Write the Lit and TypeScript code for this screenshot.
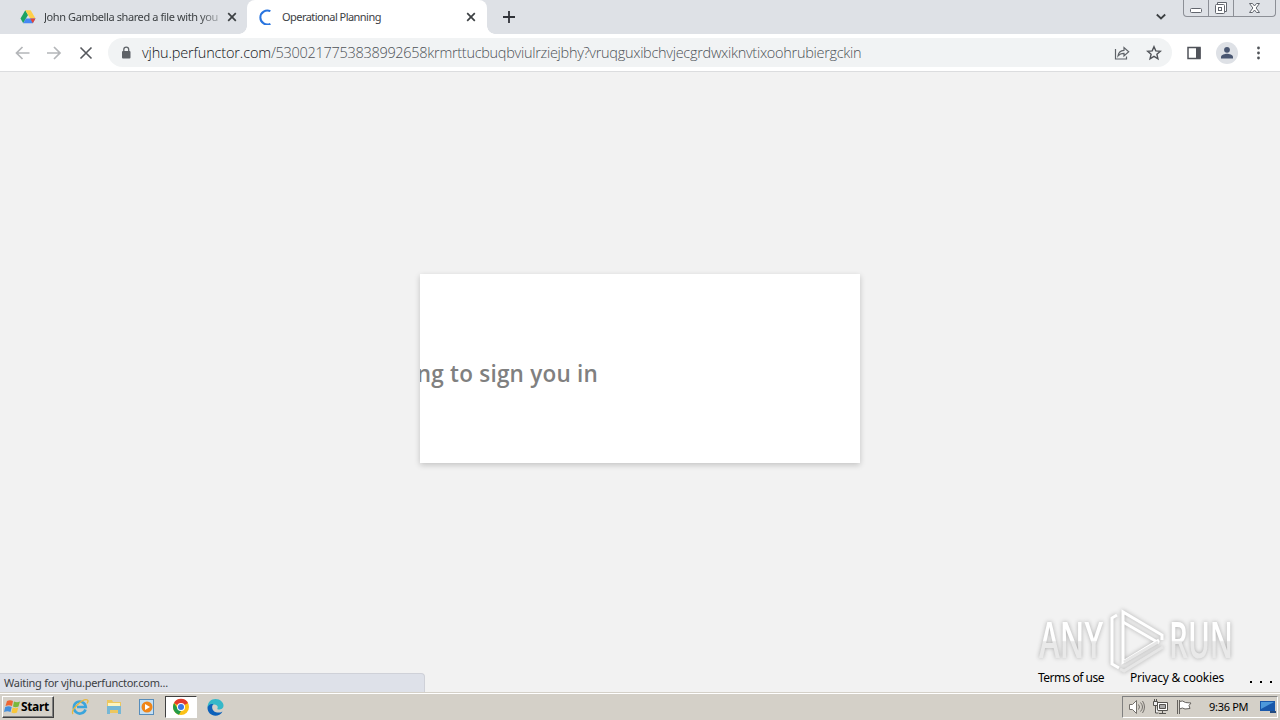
import { LitElement, html, css, svg } from 'lit';
import { customElement } from 'lit/decorators.js';

const closeIcon = html`<svg class="close" width="10" height="10" viewBox="0 0 10 10"><path d="M1.2 1.2 8.8 8.8M8.8 1.2 1.2 8.8" stroke="#3c4043" stroke-width="1.7" /></svg>`;

@customElement('browser-tabs')
export class BrowserTabs extends LitElement {
  static styles = css`
    :host {
      display: flex;
      height: 34px;
      background: #dee1e6;
      color: #3c4043;
      font: 11px/34px 'Noto Sans', sans-serif;
    }
    .tab {
      display: flex;
      align-items: center;
      box-sizing: border-box;
      width: 240px;
      padding: 0 11px 0 11px;
    }
    .first {
      width: 247px;
      padding: 0 10px 0 20px;
    }
    .active {
      position: relative;
      background: #fff;
      border-radius: 8px 8px 0 0;
    }
    .active::before,
    .active::after {
      content: '';
      position: absolute;
      bottom: 0;
      width: 8px;
      height: 8px;
    }
    .active::before {
      left: -8px;
      background: radial-gradient(circle at 0 0, transparent 7.5px, #fff 8px);
    }
    .active::after {
      right: -8px;
      background: radial-gradient(circle at 100% 0, transparent 7.5px, #fff 8px);
    }
    .title {
      flex: 1;
      white-space: nowrap;
      margin-left: 8px;
      letter-spacing: -0.55px;
    }
    .first .title {
      width: 176px;
      margin-right: 6px;
      letter-spacing: -0.4px;
      mask-image: linear-gradient(90deg, #000 155px, rgba(0, 0, 0, 0.2) 178px);
    }
    .close {
      flex: none;
    }
    .plus {
      margin: 11px 0 0 16px;
    }
    .chevron {
      margin: 13px 17px 0 auto;
    }
    .window {
      display: flex;
      box-sizing: border-box;
      width: 93px;
      height: 17px;
      margin-right: 4px;
      border: 1px solid #8c8f96;
      border-top: 0;
      border-radius: 0 0 4px 4px;
    }
  `;

  render() {
    return html`
      <div class="tab first">
        <svg width="16" height="16" viewBox="0 0 16 16">
          <path fill="#1ea362" d="M5.3 1.2 8 5.9 3.2 14.2.5 9.6z" />
          <path fill="#ffcf48" d="M5.3 1.2h5.4l4.8 8.4h-5.4z" />
          <path fill="#4688f4" d="M3.2 14.2 5.9 9.6h9.6l-2.7 4.6z" />
          <path fill="#e94335" d="m12.8 14.2-2.6-4.6h5.3z" />
        </svg>
        <span class="title">John Gambella shared a file with you</span>${closeIcon}
      </div>
      <div class="tab active">
        <svg width="16" height="16" viewBox="0 0 16 16">
          <path d="M12.4 2.2A7 7 0 1 0 12.4 14.8" fill="none" stroke="#2874df" stroke-width="2" />
        </svg>
        <span class="title">Operational Planning</span>${closeIcon}
      </div>
      <svg class="plus" width="12" height="12" viewBox="0 0 12 12"><path d="M6 0v12M0 6h12" stroke="#303238" stroke-width="1.8" /></svg>
      <svg class="chevron" width="10" height="8" viewBox="0 0 10 8"><path d="m.8 1.5 4.2 4 4.2-4" fill="none" stroke="#3c4043" stroke-width="1.8" /></svg>
      <div class="window">
        <svg width="91" height="16" viewBox="0 0 91 16" fill="none" stroke="#62666e">
          <path d="M24.5 0v16M49.5 0v16" stroke="#8c8f96" />
          <rect x="6.5" y="8.5" width="11" height="4" rx="1" fill="#fff" />
          <path d="M33.5 4.5V2.5H42.5V11.5H40.5" fill="#fff" />
          <rect x="31.5" y="4.5" width="9" height="9" rx="1" fill="#fff" />
          <rect x="34.5" y="7.5" width="3" height="3" />
          <path d="M65.5 3.5h3l2 2.5 2-2.5h3l-3.4 4.5 3.4 4.5h-3l-2-2.5-2 2.5h-3l3.4-4.5z" fill="#fff" />
        </svg>
      </div>
    `;
  }
}

@customElement('browser-toolbar')
export class BrowserToolbar extends LitElement {
  static styles = css`
    :host {
      display: flex;
      align-items: center;
      box-sizing: border-box;
      height: 38px;
      padding: 0 12px 0 14px;
      background: #fff;
      border-bottom: 1px solid #dcdddf;
    }
    .nav {
      margin-right: 16px;
    }
    .address {
      display: flex;
      align-items: center;
      box-sizing: border-box;
      width: 1064px;
      height: 29px;
      padding: 0 10px 0 12px;
      margin: 0 14px 0 -2px;
      border-radius: 15px;
      background: #f1f3f4;
    }
    .url {
      flex: 1;
      margin-left: 10px;
      white-space: nowrap;
      font: 300 14.5px/28px 'Open Sans', sans-serif;
      letter-spacing: -0.29px;
      color: #4d5257;
    }
    .host {
      letter-spacing: -0.15px;
      color: #111317;
    }
    .star {
      margin-left: 16px;
    }
    .avatar {
      margin: 0 14px;
    }
  `;

  render() {
    return html`
      <svg class="nav" width="16" height="16" viewBox="0 0 16 16"><path d="M15.5 8H3M8.5 2 2.5 8l6 6" fill="none" stroke="#b4b6b9" stroke-width="1.7" /></svg>
      <svg class="nav" width="16" height="16" viewBox="0 0 16 16"><path d="M1 8h12.5M8 2l6 6-6 6" fill="none" stroke="#b4b6b9" stroke-width="1.7" /></svg>
      <svg class="nav" width="16" height="16" viewBox="0 0 16 16"><path d="m2.5 2.5 11 11m0-11-11 11" stroke="#55585d" stroke-width="1.6" /></svg>
      <div class="address">
        <svg width="12" height="14" viewBox="0 0 12 14">
          <rect x="2" y="5" width="8.5" height="7.5" rx="1" fill="#5f6368" />
          <path d="M3.8 5.5V3.5a2.45 2.45 0 0 1 4.9 0v2" fill="none" stroke="#5f6368" stroke-width="1.3" />
        </svg>
        <span class="url"><span class="host">vjhu.perfunctor.com</span>/5300217753838992658krmrttucbuqbviulrziejbhy?vruqguxibchvjecgrdwxiknvtixoohrubiergckin</span>
        <svg width="16" height="16" viewBox="0 0 16 16" fill="none" stroke="#5f6368" stroke-width="1.2">
          <path d="M1.5 4v10h11v-2.5M4 11c.4-3.800 2.5-5.500 6-5.700V2.500l4.700 4.300L10 11V8.300c-2.700 0-4.500.7-6 2.700z" />
        </svg>
        <svg class="star" width="16" height="16" viewBox="0 0 16 16"><path d="m8 1.700 1.800 4.200 4.600.4-3.500 3 1.050 4.500L8 11.400l-3.950 2.400 1.050-4.500-3.500-3 4.600-.4z" fill="none" stroke="#505358" stroke-width="1.4" /></svg>
      </div>
      <svg width="16" height="16" viewBox="0 0 16 16"><path d="M2 2.500h12v11H2z" fill="none" stroke="#50535a" stroke-width="1.5" /><path fill="#50535a" d="M10 2.500h4.500v11H10z" /></svg>
      <svg class="avatar" width="22" height="22" viewBox="0 0 22 22"><circle cx="11" cy="11" r="11" fill="#dee1e6" /><circle cx="11" cy="7.800" r="2.900" fill="#495671" /><path d="M5 16.500v-1.500c0-2 4-3.200 6-3.200s6 1.200 6 3.200v1.500z" fill="#495671" /></svg>
      <svg width="16" height="16" viewBox="0 0 16 16" fill="#505358"><circle cx="6.500" cy="3" r="1.400" /><circle cx="6.500" cy="8" r="1.400" /><circle cx="6.500" cy="13" r="1.400" /></svg>
    `;
  }
}

@customElement('sign-in-page')
export class SignInPage extends LitElement {
  static styles = css`
    :host {
      position: relative;
      display: flex;
      justify-content: center;
      align-items: flex-start;
      height: 620px;
      background: #f2f2f2;
      font-family: 'Noto Sans', sans-serif;
    }
    .card {
      display: flex;
      justify-content: flex-start;
      box-sizing: border-box;
      width: 440px;
      height: 189px;
      margin-top: 202px;
      overflow: hidden;
      background: #fff;
      box-shadow: 0 2px 6px rgba(0, 0, 0, 0.2);
    }
    /* slides out to the left, clipped by the card */
    .message {
      display: flex;
      flex: none;
      justify-content: flex-end;
      width: 178px;
      margin-top: 84px;
      white-space: nowrap;
      font: 600 22.5px/32px 'Open Sans', sans-serif;
      letter-spacing: 0.22px;
      color: #808080;
    }
    .links {
      position: absolute;
      right: 8px;
      bottom: 6px;
      display: flex;
      align-items: center;
      gap: 26px;
      font-size: 12px;
      line-height: 16px;
      color: #000;
    }
    .terms {
      letter-spacing: -0.5px;
    }
    .privacy {
      letter-spacing: -0.2px;
    }
    .dots {
      display: flex;
      gap: 8px;
      padding-top: 7px;
    }
    .dot {
      width: 2px;
      height: 2px;
      background: #000;
    }
    .watermark {
      position: absolute;
      right: 40px;
      bottom: 18px;
      filter: drop-shadow(0 0 2px #aaa);
    }
    .status {
      position: absolute;
      left: 0;
      bottom: 0;
      box-sizing: border-box;
      width: 425px;
      height: 19px;
      padding-left: 4px;
      border: 1px solid #cfd1d8;
      border-width: 1px 1px 0 0;
      border-radius: 0 4px 0 0;
      background: #dee1e9;
      font-size: 11px;
      line-height: 17px;
      letter-spacing: -0.26px;
      color: #3c4043;
    }
  `;

  render() {
    return html`
      <div class="card"><div class="message">Trying to sign you in</div></div>
      <svg class="watermark" width="204" height="66" viewBox="0 0 204 66">
        <defs>
          <linearGradient id="fade" x2="0" y2="1"><stop offset=".52" stop-color="#fff" /><stop offset=".54" stop-color="#e9e9e9" /></linearGradient>
        </defs>
        <g fill="url(#fade)" font-family="'Open Sans', sans-serif" font-size="50" font-weight="600">
          <text x="3" y="50" textLength="64" lengthAdjust="spacingAndGlyphs">ANY</text>
          <text x="133" y="50" textLength="64" lengthAdjust="spacingAndGlyphs">RUN</text>
        </g>
        <g fill="none" stroke="#fff" stroke-width="3">
          <path d="M81 7l-5 3v46l7 4" />
          <path d="M126 32V27L87 4v50l36-22" />
          <path d="M87 14l36 21" />
          <path d="M84 61l4 2 39-24M88 54l34-20" stroke="#e6e6e6" />
        </g>
      </svg>
      <div class="links">
        <span class="terms">Terms of use</span>
        <span class="privacy">Privacy &amp; cookies</span>
        <span class="dots"><i class="dot"></i><i class="dot"></i><i class="dot"></i></span>
      </div>
      <div class="status">Waiting for vjhu.perfunctor.com...</div>
    `;
  }
}

const edge = svg`<path d="M1.500 10C1.500 4 5 1 9.500 1c5 0 8 3.500 8 6.500 0 3-2.500 4-4.500 4-1.500 0-2-.5-1.500-1.300C12.500 8 10 6.500 8 6.500c-3.500 0-6.500 2-6.500 3.500z" fill="#35b8c9" /><path d="M1.500 10c0-2 3-4.500 6-3.800C5 8 6 13 10 14.300c2.500.7 4.500.2 6.500-.9-1.500 3-4.500 4.300-7 4.300-4.500 0-8-3.500-8-7.700z" fill="#0d61ba" />`;

@customElement('task-bar')
export class TaskBar extends LitElement {
  static styles = css`
    :host {
      display: flex;
      align-items: center;
      box-sizing: border-box;
      height: 28px;
      padding: 1px 2px 1px;
      border-top: 1px solid #d4d0c8;
      background: #d4d0c8;
      box-shadow: inset 0 1px #fff;
      font-family: 'Noto Sans', sans-serif;
      color: #000;
    }
    .start {
      display: flex;
      align-items: center;
      box-sizing: border-box;
      width: 52px;
      height: 22px;
      margin-right: 17px;
      padding-left: 1px;
      border: 1px solid;
      border-color: #fff #404040 #404040 #fff;
      box-shadow: inset -1px -1px #808080;
      font-size: 12px;
      font-weight: 700;
      letter-spacing: -0.35px;
    }
    .quick {
      width: 18px;
      height: 18px;
      margin-right: 15.5px;
    }
    .current {
      display: flex;
      align-items: center;
      justify-content: center;
      box-sizing: border-box;
      width: 32px;
      height: 22px;
      margin: 0 9px 0 -6.5px;
      border: 1px solid;
      border-color: #404040 #fff #fff #404040;
      background: #fff;
    }
    .tray {
      display: flex;
      align-items: center;
      box-sizing: border-box;
      width: 156px;
      height: 22px;
      margin-left: auto;
      padding-left: 5px;
      border: 1px solid;
      border-color: #808080 #fff #fff #808080;
      font-size: 11px;
      letter-spacing: -0.3px;
    }
    .tray svg {
      margin-right: 7px;
    }
    .clock {
      flex: 1;
      margin-left: 9px;
      white-space: nowrap;
    }
    .tray .desktop {
      margin-right: 0;
    }
  `;

  render() {
    return html`
      <div class="start">
        <svg width="17" height="16" viewBox="0 0 17 16">
          <path d="M3 2c2-1 4-1 6 0L8 7C6 6 4 6 1.500 7z" fill="#ee6633" />
          <path d="M10 2.500c2 1 4 1 6 0L14.500 7.500c-2 1-4 1-5.500 0z" fill="#79b83c" />
          <path d="M1.200 8c2.300-1 4.500-1 6.500 0l-1.200 5C4.500 12 2.500 12 0 13z" fill="#448fdc" />
          <path d="M8.700 8.500c2 1 4 1 5.500 0L13 13.500c-2 1-4 1-5.500 0z" fill="#f8c639" />
        </svg>
        Start
      </div>
      <svg class="quick" viewBox="0 0 18 18">
        <path d="M14.500 11.500A6 6 0 1 1 14.800 9H6" fill="none" stroke="#3ba5dc" stroke-width="2.600" />
        <path d="M2 16C-1 12 12 0 16.500 2c1 .6.500 2-.5 3.500" fill="none" stroke="#e9b83c" stroke-width="1.300" />
      </svg>
      <svg class="quick" viewBox="0 0 18 18">
        <path d="M2 4V2h5l1 2h8v11H2z" fill="#edc75e" />
        <path d="M3 5h12v4H3z" fill="#fff4bd" />
        <path d="M2 8h14v8h-3v-4H5v4H2z" fill="#76b7d5" />
      </svg>
      <svg class="quick" viewBox="0 0 18 18">
        <rect x="1.500" y="1.500" width="14" height="15" fill="#c5e0f4" stroke="#578dbb" />
        <circle cx="9" cy="9" r="5.500" fill="#ef8619" />
        <path d="m7 6 5 3-5 3z" fill="#fff" />
      </svg>
      <div class="current">
        <svg width="18" height="18" viewBox="0 0 18 18">
          <circle cx="9" cy="9" r="8" fill="#fbc116" />
          <path d="M9 9 2 5a8 8 0 0 1 14 0z" fill="#e33b2e" />
          <path d="M2.070 5 6 11l3 2-2 3.750A8 8 0 0 1 2.070 5z" fill="#249b48" />
          <circle cx="9" cy="9" r="4" fill="#fff" />
          <circle cx="9" cy="9" r="3" fill="#3978e6" />
        </svg>
      </div>
      <svg class="quick" viewBox="0 0 18 18">${edge}</svg>
      <div class="tray">
        <svg width="17" height="16" viewBox="0 0 17 16" fill="none" stroke="#74716c">
          <path d="M1.500 5.500h3l4-4v13l-4-4h-3z" fill="#fff" />
          <path d="M10.500 5.500q2 2.500 0 5M12.500 3.500q4 4.500 0 9M14.500 2q4 6 0 12" />
        </svg>
        <svg width="17" height="16" viewBox="0 0 17 16" fill="none" stroke="#55534f">
          <path d="M5.500 3.500h10v8h-10zM7 14.500h7M10.500 12v2" fill="#fff" />
          <path d="M7.500 5.500h6v4h-6z" fill="#aaa" />
          <path d="M1.500 2.500h4v4h-4zM2.500 0v2M4.500 0v2M3.500 7v7h3" fill="#eee" />
        </svg>
        <svg width="17" height="16" viewBox="0 0 17 16" fill="#fff" stroke="#65625e">
          <path d="M1.500 1v14M3.500 1v14M3.500 2.500q3-1.500 6 1l5.500.5-2 2.500 1 3-5 .5q-2.500-2-5.500 0" />
        </svg>
        <span class="clock">9:36 PM</span>
        <svg class="desktop" width="18" height="14" viewBox="0 0 18 14">
          <path d="M1 1h15v10H1z" fill="#1958aa" />
          <path d="M2 2h13L2 9z" fill="#4d99db" />
          <path d="M11 12h6" stroke="#234b80" stroke-width="2" />
        </svg>
      </div>
    `;
  }
}

@customElement('app-root')
export class AppRoot extends LitElement {
  static styles = css`
    :host {
      display: flex;
      flex-direction: column;
      width: 1280px;
      height: 720px;
      overflow: hidden;
    }
  `;

  render() {
    return html`
      <browser-tabs></browser-tabs>
      <browser-toolbar></browser-toolbar>
      <sign-in-page></sign-in-page>
      <task-bar></task-bar>
    `;
  }
}
